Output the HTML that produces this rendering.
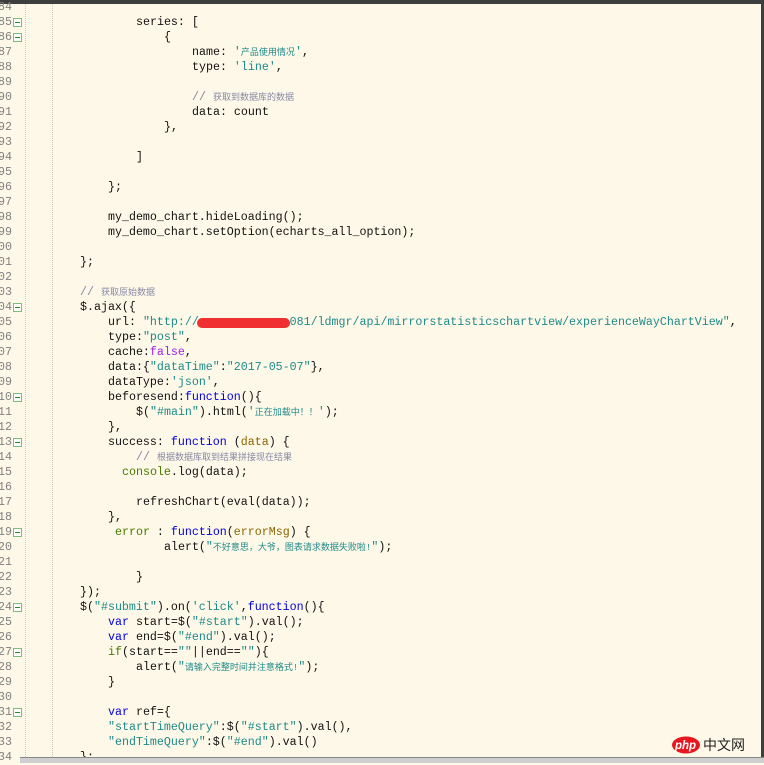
<!DOCTYPE html>
<html><head><meta charset="utf-8"><style>
html,body{margin:0;padding:0}
body{width:764px;height:762px;overflow:hidden;background:#fdf8e7;position:relative;font-family:"Liberation Mono","Noto Sans CJK SC",monospace;font-size:11.65px;color:#111}
#top{position:absolute;left:0;top:0;width:764px;height:4px;background:#3e3e3e}
#right{position:absolute;right:0;top:0;width:3px;height:762px;background:#3e3e3e}
#bot{position:absolute;left:20px;top:757px;width:744px;height:5px;background:#cfcfcf;border-top:1px solid #888}
.ln{position:absolute;left:-3px;width:15px;text-align:right;color:#808080;height:15px;line-height:15px}
.fb{position:absolute;left:13px;width:7px;height:7px;border:1px solid #7bbf7b;background:#fff}
.fb:after{content:"";position:absolute;left:1px;top:3px;width:5px;height:1px;background:#2a8a2a}
.c{position:absolute;left:24px;white-space:pre;height:15px;line-height:15px}
.g{position:absolute;top:4px;height:753px;border-left:1px dotted #c8c8b8}
.k{color:#0000e0}.s{color:#1f8a8a}.cm{color:#8888a8}.p{color:#a020f0}.a{color:#8a6500}.o{color:#4a7a00}
.z{font-size:9px}
#red{position:absolute;left:197px;top:318px;width:93px;height:10px;background:#f03030;border-radius:5px}
#logo{position:absolute;left:672px;top:736px;height:18px}
</style></head><body>
<div class="g" style="left:25px"></div><div class="g" style="left:52px"></div>
<div id="top"></div>
<div id="code"></div>
<div id="red"></div>
<div id="logo"><svg width="84" height="18"><ellipse cx="14" cy="9" rx="14" ry="8.5" fill="#e8161e"/><text x="3" y="13" font-family="Liberation Sans" font-style="italic" font-weight="bold" font-size="11.5" fill="#fff">php</text><text x="31" y="14" font-family="Noto Sans CJK SC,sans-serif" font-size="14" fill="#222">中文网</text></svg></div>
<div id="right"></div>
<div id="bot"></div>
<script>
var L=[
[84,0,'',0],
[85,16,'series: [',1],
[86,20,'{',1],
[87,24,'name: <span class="s">\'<span class="z">产品使用情况</span>\'</span>,',0],
[88,24,'type: <span class="s">\'line\'</span>,',0],
[89,0,'',0],
[90,24,'<span class="cm">// <span class="z">获取到数据库的数据</span></span>',0],
[91,24,'data: count',0],
[92,20,'},',0],
[93,0,'',0],
[94,16,']',0],
[95,0,'',0],
[96,12,'};',0],
[97,0,'',0],
[98,12,'my_demo_chart.hideLoading();',0],
[99,12,'my_demo_chart.setOption(echarts_all_option);',0],
[100,0,'',0],
[101,8,'};',0],
[102,0,'',0],
[103,8,'<span class="cm">// <span class="z">获取原始数据</span></span>',0],
[104,8,'$.ajax({',1],
[105,12,'url: <span class="s">"http://             081/ldmgr/api/mirrorstatisticschartview/experienceWayChartView"</span>,',0],
[106,12,'type:<span class="s">"post"</span>,',0],
[107,12,'cache:<span class="p">false</span>,',0],
[108,12,'data:{<span class="s">"dataTime"</span>:<span class="s">"2017-05-07"</span>},',0],
[109,12,'dataType:<span class="s">\'json\'</span>,',0],
[110,12,'beforesend:<span class="k">function</span>(){',1],
[111,16,'$(<span class="s">"#main"</span>).html(<span class="s">\'<span class="z">正在加载中！！</span>\'</span>);',0],
[112,12,'},',0],
[113,12,'success: <span class="k">function</span> (<span class="a">data</span>) {',1],
[114,16,'<span class="cm">// <span class="z">根据数据库取到结果拼接现在结果</span></span>',0],
[115,14,'<span class="o">console</span>.log(data);',0],
[116,0,'',0],
[117,16,'refreshChart(eval(data));',0],
[118,12,'},',0],
[119,13,'<span class="o">error</span> : <span class="k">function</span>(<span class="a">errorMsg</span>) {',1],
[120,20,'alert(<span class="s">"<span class="z">不好意思，大爷，图表请求数据失败啦!</span>"</span>);',0],
[121,0,'',0],
[122,16,'}',0],
[123,8,'});',0],
[124,8,'$(<span class="s">"#submit"</span>).on(<span class="s">\'click\'</span>,<span class="k">function</span>(){',1],
[125,12,'<span class="k">var</span> start=$(<span class="s">"#start"</span>).val();',0],
[126,12,'<span class="k">var</span> end=$(<span class="s">"#end"</span>).val();',0],
[127,12,'<span class="o">if</span>(start==<span class="s">""</span>||end==<span class="s">""</span>){',1],
[128,16,'alert(<span class="s">"<span class="z">请输入完整时间并注意格式!</span>"</span>);',0],
[129,12,'}',0],
[130,0,'',0],
[131,12,'<span class="k">var</span> ref={',1],
[132,12,'<span class="s">"startTimeQuery"</span>:$(<span class="s">"#start"</span>).val(),',0],
[133,12,'<span class="s">"endTimeQuery"</span>:$(<span class="s">"#end"</span>).val()',0],
[134,8,'};',0]];
var h='';
L.forEach(function(l){var t=0+(l[0]-84)*15;
h+='<div class="ln" style="top:'+t+'px">'+String(l[0]).slice(-2)+'</div>';
if(l[3])h+='<div class="fb" style="top:'+(t+3)+'px"></div>';
h+='<div class="c" style="top:'+t+'px;left:'+(24+l[1]*7)+'px">'+l[2]+'</div>';});
document.getElementById('code').innerHTML=h;
</script>
</body></html>
